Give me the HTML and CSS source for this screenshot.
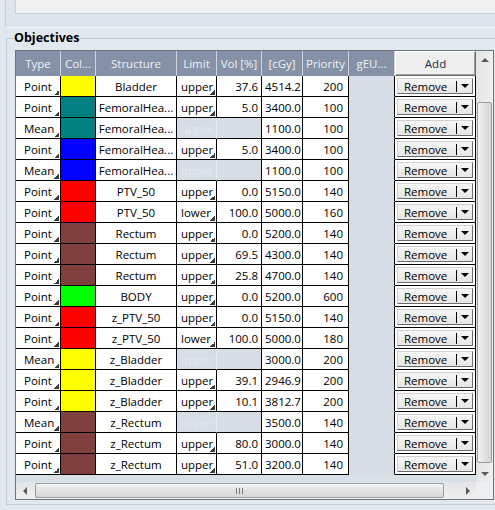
FILE: index.html
```html
<!DOCTYPE html>
<html>
<head>
<meta charset="utf-8">
<link rel="stylesheet" href="styles.css">
</head>
<body>
<div class="top"><div class="top-inner"></div></div>
<fieldset class="group">
  <legend class="group-title">Objectives</legend>
  <div class="frame">
    <div class="view">
      <div class="hdr">
        <div class="h">Type</div>
        <div class="h">Col...</div>
        <div class="h">Structure</div>
        <div class="h">Limit</div>
        <div class="h">Vol [%]</div>
        <div class="h">[cGy]</div>
        <div class="h">Priority</div>
        <div class="h">gEU...</div>
        <div class="h h-add">Add</div>
      </div>

      <div class="row"><div class="c type">Point</div><div class="c sw yellow"></div><div class="c struct">Bladder</div><div class="c lim">upper</div><div class="c vol">37.6</div><div class="c dose">4514.2</div><div class="c prio">200</div><div class="c geu"></div><div class="c act"><div class="rm"><span class="rm-label">Remove</span><span class="rm-sep"></span><span class="rm-drop"><span class="tri-down"></span></span></div></div></div>
      <div class="row"><div class="c type">Point</div><div class="c sw teal"></div><div class="c struct">FemoralHea...</div><div class="c lim">upper</div><div class="c vol">5.0</div><div class="c dose">3400.0</div><div class="c prio">100</div><div class="c geu"></div><div class="c act"><div class="rm"><span class="rm-label">Remove</span><span class="rm-sep"></span><span class="rm-drop"><span class="tri-down"></span></span></div></div></div>
      <div class="row"><div class="c type">Mean</div><div class="c sw teal"></div><div class="c struct">FemoralHea...</div><div class="c lim off">upper</div><div class="c vol off"></div><div class="c dose">1100.0</div><div class="c prio">100</div><div class="c geu"></div><div class="c act"><div class="rm"><span class="rm-label">Remove</span><span class="rm-sep"></span><span class="rm-drop"><span class="tri-down"></span></span></div></div></div>
      <div class="row"><div class="c type">Point</div><div class="c sw blue"></div><div class="c struct">FemoralHea...</div><div class="c lim">upper</div><div class="c vol">5.0</div><div class="c dose">3400.0</div><div class="c prio">100</div><div class="c geu"></div><div class="c act"><div class="rm"><span class="rm-label">Remove</span><span class="rm-sep"></span><span class="rm-drop"><span class="tri-down"></span></span></div></div></div>
      <div class="row"><div class="c type">Mean</div><div class="c sw blue"></div><div class="c struct">FemoralHea...</div><div class="c lim off">upper</div><div class="c vol off"></div><div class="c dose">1100.0</div><div class="c prio">100</div><div class="c geu"></div><div class="c act"><div class="rm"><span class="rm-label">Remove</span><span class="rm-sep"></span><span class="rm-drop"><span class="tri-down"></span></span></div></div></div>
      <div class="row"><div class="c type">Point</div><div class="c sw red"></div><div class="c struct">PTV_50</div><div class="c lim">upper</div><div class="c vol">0.0</div><div class="c dose">5150.0</div><div class="c prio">140</div><div class="c geu"></div><div class="c act"><div class="rm"><span class="rm-label">Remove</span><span class="rm-sep"></span><span class="rm-drop"><span class="tri-down"></span></span></div></div></div>
      <div class="row"><div class="c type">Point</div><div class="c sw red"></div><div class="c struct">PTV_50</div><div class="c lim">lower</div><div class="c vol">100.0</div><div class="c dose">5000.0</div><div class="c prio">160</div><div class="c geu"></div><div class="c act"><div class="rm"><span class="rm-label">Remove</span><span class="rm-sep"></span><span class="rm-drop"><span class="tri-down"></span></span></div></div></div>
      <div class="row"><div class="c type">Point</div><div class="c sw brown"></div><div class="c struct">Rectum</div><div class="c lim">upper</div><div class="c vol">0.0</div><div class="c dose">5200.0</div><div class="c prio">140</div><div class="c geu"></div><div class="c act"><div class="rm"><span class="rm-label">Remove</span><span class="rm-sep"></span><span class="rm-drop"><span class="tri-down"></span></span></div></div></div>
      <div class="row"><div class="c type">Point</div><div class="c sw brown"></div><div class="c struct">Rectum</div><div class="c lim">upper</div><div class="c vol">69.5</div><div class="c dose">4300.0</div><div class="c prio">140</div><div class="c geu"></div><div class="c act"><div class="rm"><span class="rm-label">Remove</span><span class="rm-sep"></span><span class="rm-drop"><span class="tri-down"></span></span></div></div></div>
      <div class="row"><div class="c type">Point</div><div class="c sw brown"></div><div class="c struct">Rectum</div><div class="c lim">upper</div><div class="c vol">25.8</div><div class="c dose">4700.0</div><div class="c prio">140</div><div class="c geu"></div><div class="c act"><div class="rm"><span class="rm-label">Remove</span><span class="rm-sep"></span><span class="rm-drop"><span class="tri-down"></span></span></div></div></div>
      <div class="row"><div class="c type">Point</div><div class="c sw green"></div><div class="c struct">BODY</div><div class="c lim">upper</div><div class="c vol">0.0</div><div class="c dose">5200.0</div><div class="c prio">600</div><div class="c geu"></div><div class="c act"><div class="rm"><span class="rm-label">Remove</span><span class="rm-sep"></span><span class="rm-drop"><span class="tri-down"></span></span></div></div></div>
      <div class="row"><div class="c type">Point</div><div class="c sw red"></div><div class="c struct">z_PTV_50</div><div class="c lim">upper</div><div class="c vol">0.0</div><div class="c dose">5150.0</div><div class="c prio">140</div><div class="c geu"></div><div class="c act"><div class="rm"><span class="rm-label">Remove</span><span class="rm-sep"></span><span class="rm-drop"><span class="tri-down"></span></span></div></div></div>
      <div class="row"><div class="c type">Point</div><div class="c sw red"></div><div class="c struct">z_PTV_50</div><div class="c lim">lower</div><div class="c vol">100.0</div><div class="c dose">5000.0</div><div class="c prio">180</div><div class="c geu"></div><div class="c act"><div class="rm"><span class="rm-label">Remove</span><span class="rm-sep"></span><span class="rm-drop"><span class="tri-down"></span></span></div></div></div>
      <div class="row"><div class="c type">Mean</div><div class="c sw yellow"></div><div class="c struct">z_Bladder</div><div class="c lim off">upper</div><div class="c vol off"></div><div class="c dose">3000.0</div><div class="c prio">200</div><div class="c geu"></div><div class="c act"><div class="rm"><span class="rm-label">Remove</span><span class="rm-sep"></span><span class="rm-drop"><span class="tri-down"></span></span></div></div></div>
      <div class="row"><div class="c type">Point</div><div class="c sw yellow"></div><div class="c struct">z_Bladder</div><div class="c lim">upper</div><div class="c vol">39.1</div><div class="c dose">2946.9</div><div class="c prio">200</div><div class="c geu"></div><div class="c act"><div class="rm"><span class="rm-label">Remove</span><span class="rm-sep"></span><span class="rm-drop"><span class="tri-down"></span></span></div></div></div>
      <div class="row"><div class="c type">Point</div><div class="c sw yellow"></div><div class="c struct">z_Bladder</div><div class="c lim">upper</div><div class="c vol">10.1</div><div class="c dose">3812.7</div><div class="c prio">200</div><div class="c geu"></div><div class="c act"><div class="rm"><span class="rm-label">Remove</span><span class="rm-sep"></span><span class="rm-drop"><span class="tri-down"></span></span></div></div></div>
      <div class="row"><div class="c type">Mean</div><div class="c sw brown"></div><div class="c struct">z_Rectum</div><div class="c lim off">upper</div><div class="c vol off"></div><div class="c dose">3500.0</div><div class="c prio">140</div><div class="c geu"></div><div class="c act"><div class="rm"><span class="rm-label">Remove</span><span class="rm-sep"></span><span class="rm-drop"><span class="tri-down"></span></span></div></div></div>
      <div class="row"><div class="c type">Point</div><div class="c sw brown"></div><div class="c struct">z_Rectum</div><div class="c lim">upper</div><div class="c vol">80.0</div><div class="c dose">3000.0</div><div class="c prio">140</div><div class="c geu"></div><div class="c act"><div class="rm"><span class="rm-label">Remove</span><span class="rm-sep"></span><span class="rm-drop"><span class="tri-down"></span></span></div></div></div>
      <div class="row"><div class="c type">Point</div><div class="c sw brown"></div><div class="c struct">z_Rectum</div><div class="c lim">upper</div><div class="c vol">51.0</div><div class="c dose">3200.0</div><div class="c prio">140</div><div class="c geu"></div><div class="c act"><div class="rm"><span class="rm-label">Remove</span><span class="rm-sep"></span><span class="rm-drop"><span class="tri-down"></span></span></div></div></div>
    </div>

    <div class="vscroll">
      <div class="sb-btn"><span class="tri-up"></span></div>
      <div class="sb-gap-top"></div>
      <div class="sb-thumb-v"></div>
      <div class="sb-gap-bot"></div>
      <div class="sb-btn"><span class="tri-down sm"></span></div>
    </div>

    <div class="hscroll">
      <div class="sb-btn"><span class="tri-left"></span></div>
      <div class="sb-gap-left"></div>
      <div class="sb-thumb-h"><span class="grip"></span><span class="grip"></span><span class="grip"></span></div>
      <div class="sb-gap-right"></div>
      <div class="sb-btn"><span class="tri-right"></span></div>
    </div>

    <div class="corner"></div>
  </div>
</fieldset>
</body>
</html>
```

FILE: styles.css
```css
* { box-sizing: border-box; }
html, body { margin: 0; padding: 0; }
body {
  width: 495px;
  height: 510px;
  overflow: hidden;
  background: #e2e8ee;
  font-family: "Open Sans", "Noto Sans", sans-serif;
  font-size: 11.5px;
  color: #000;
}

.top {
  margin-left: 5px;
  height: 28px;
  background: #dde4ec;
  border-left: 1px solid #c9d1db;
  border-bottom: 1px solid #f7f9fb;
}
.top-inner {
  margin-left: 9px;
  height: 14px;
  background: #f0f0f0;
  border-left: 1px solid #c9d1db;
  border-bottom: 1px solid #c9d1db;
}

.group {
  margin: 2px 0 0 6px;
  padding: 4px 0 4px 8px;
  border: 1px solid #c5cdd7;
  border-right: none;
  min-width: 0;
}
.group-title {
  margin-left: -1px;
  padding: 0;
  font-weight: bold;
  font-size: 12.5px;
  line-height: 16px;
  color: #000;
}

.frame {
  display: grid;
  grid-template-columns: 460px 17px;
  grid-template-rows: 431px 17px;
  width: 479px;
  border: 1px solid #6f747c;
  background: #d8dfe7;
}

.view {
  overflow: hidden;
  background: #d8dfe7;
}

.hdr, .row {
  display: grid;
  grid-template-columns: 45px 35px 81px 40px 45px 41px 46px 46px 81px;
}
.hdr {
  height: 25px;
  background: #8591a6;
}
.h {
  border-right: 1px solid #cdd4de;
  color: #edf1f6;
  text-align: center;
  line-height: 25px;
  white-space: nowrap;
  overflow: hidden;
}
.h-add {
  border: 1px solid;
  border-color: #ffffff #6a6a6a #6a6a6a #ffffff;
  background: #efefef;
  color: #1b2b4d;
  box-shadow: inset -1px -1px 0 #a0a0a0;
  line-height: 23px;
}

.row { height: 21px; }
.c {
  border-right: 1px solid #000;
  border-bottom: 1px solid #000;
  background: #fff;
  line-height: 21px;
  white-space: nowrap;
  overflow: hidden;
}
.type {
  padding-left: 8px;
  background: #fff linear-gradient(135deg, transparent 50%, #3c3c3c 50%) no-repeat right 1px bottom 1px / 5px 5px;
}
.lim {
  padding-left: 4px;
  background: #fff linear-gradient(135deg, transparent 50%, #3c3c3c 50%) no-repeat right 1px bottom 1px / 5px 5px;
}
.struct { text-align: center; }
.vol { text-align: right; padding-right: 3px; }
.dose { padding-left: 3px; }
.prio { text-align: right; padding-right: 5px; }
.geu {
  background: #d6dde6;
  border-bottom-color: #d6dde6;
}
.off {
  background: #d6dde6;
  color: #e3e8ee;
}
.lim.off { border-right-color: #e9edf2; }

.sw.yellow { background: #ffff00; }
.sw.teal { background: #008080; }
.sw.blue { background: #0000ff; }
.sw.red { background: #ff0000; }
.sw.brown { background: #804040; }
.sw.green { background: #00ff00; }

.act { background: #fff; }
.rm {
  display: flex;
  align-items: stretch;
  width: 76px;
  height: 16px;
  margin: 2px 0 0 2px;
  border: 1px solid;
  border-color: #d0d0d0 #6a6a6a #6a6a6a #d0d0d0;
  background: linear-gradient(#f6f6f6, #e6e6e6);
  line-height: 15px;
}
.rm-label {
  width: 58px;
  padding-left: 6px;
}
.rm-sep {
  width: 1px;
  margin: 2px 0 1px;
  background: #000;
}
.rm-drop {
  flex: 1;
  display: flex;
  align-items: center;
  justify-content: center;
}
.tri-down {
  width: 0;
  height: 0;
  border-left: 4px solid transparent;
  border-right: 4px solid transparent;
  border-top: 4px solid #000;
}
.tri-down.sm {
  border-top: 4px solid #5a5a5a;
}
.tri-up {
  width: 0;
  height: 0;
  border-left: 4px solid transparent;
  border-right: 4px solid transparent;
  border-bottom: 4px solid #5a5a5a;
}
.tri-left {
  width: 0;
  height: 0;
  border-top: 4px solid transparent;
  border-bottom: 4px solid transparent;
  border-right: 4px solid #5a5a5a;
}
.tri-right {
  width: 0;
  height: 0;
  border-top: 4px solid transparent;
  border-bottom: 4px solid transparent;
  border-left: 4px solid #5a5a5a;
}

.vscroll {
  display: flex;
  flex-direction: column;
  background: linear-gradient(to right, #e4e4e4, #f0f0f0);
}
.hscroll {
  display: flex;
  background: linear-gradient(#e4e4e4, #f0f0f0);
}
.sb-btn {
  flex: 0 0 17px;
  display: flex;
  align-items: center;
  justify-content: center;
}
.sb-gap-top { flex: 0 0 34px; }
.sb-gap-bot { flex: 0 0 2px; }
.sb-thumb-v {
  flex: 0 0 361px;
  margin: 0 1px;
  border: 1px solid #9c9c9c;
  border-radius: 2px;
  background: linear-gradient(to right, #f4f4f4, #e2e2e2 50%, #d6d6d6);
}
.sb-gap-left { flex: 0 0 2px; }
.sb-gap-right { flex: 0 0 15px; }
.sb-thumb-h {
  flex: 0 0 409px;
  margin: 1px 0;
  border: 1px solid #9c9c9c;
  border-radius: 2px;
  background: linear-gradient(#f4f4f4, #e2e2e2 50%, #d6d6d6);
  display: flex;
  align-items: center;
  justify-content: center;
  gap: 2px;
}
.grip {
  width: 1px;
  height: 6px;
  background: #7b7b7b;
}
.corner { background: #eceef1; }
```
